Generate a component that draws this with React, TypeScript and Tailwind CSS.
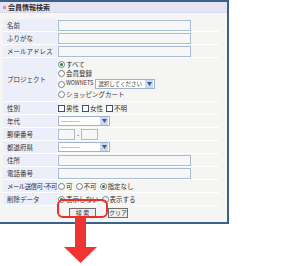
import React from "react";

const Radio = ({ checked = false }: { checked?: boolean }) => (
  <span className="inline-flex items-center justify-center w-[7px] h-[7px] rounded-full border border-[#6f7f94] bg-white mr-[1px] shrink-0">
    {checked && <span className="w-[3px] h-[3px] rounded-full bg-[#2e7d32]" />}
  </span>
);

const Check = () => (
  <span className="inline-block w-[7px] h-[7px] border border-[#3b4f74] bg-white mr-[1px] shrink-0" />
);

const Select = ({ text, w }: { text: string; w: string }) => (
  <span className={`inline-flex items-center h-[10px] border border-[#9fb4cc] bg-white ${w}`}>
    <span className="flex-1 pl-[2px] text-[5.5px] leading-[8px] text-[#333] whitespace-nowrap">{text}</span>
    <span className="w-[8px] h-[8px] mr-px bg-[#c9d8ec] flex items-center justify-center shrink-0">
      <svg width="5" height="4" viewBox="0 0 5 4"><path d="M0 0 L5 0 L2.5 4 Z" fill="#3b5c96" /></svg>
    </span>
  </span>
);

const Input = ({ w = "w-[133px]" }: { w?: string }) => (
  <span className={`block h-[11px] border border-[#a8bdd3] bg-[#f7f7f7] ${w}`} />
);

const Label = ({ children, cls = "" }: { children: React.ReactNode; cls?: string }) => (
  <div className={`bg-[#eceef9] flex items-center pl-[4px] text-[6.5px] leading-none text-[#333] whitespace-nowrap ${cls}`}>{children}</div>
);

const Val = ({ children, cls = "" }: { children?: React.ReactNode; cls?: string }) => (
  <div className={`flex items-center pl-px text-[6.5px] leading-none text-[#333] whitespace-nowrap bg-[#f5f5f4] ${cls}`}>{children}</div>
);

export default function App() {
  return (
    <div className="relative w-[281px] h-[266px] bg-white font-['Noto_Sans_CJK_JP','Noto_Sans',sans-serif] overflow-hidden">
      <div className="w-[229px] h-[224px] border-t-2 border-r-2 border-b-2 border-[#3d5f8c] bg-[#f5f5f4] flex flex-col">
        <div className="h-[11px] bg-[#e6e3f3] flex items-center pl-[3px] border-b border-dotted border-[#d4d0ea]">
          <span className="w-[3px] h-[3px] bg-[#b79ad0] mr-[2px]" />
          <span className="text-[7px] font-bold leading-none text-[#333]">会員情報検索</span>
        </div>
        <div className="mt-[6px] ml-[3px] mr-[8px] grid grid-cols-[54px_1fr] gap-y-px bg-white">
          <Label>名前</Label>
          <Val cls="h-[12px]"><Input /></Val>
          <Label>ふりがな</Label>
          <Val cls="h-[12px]"><Input /></Val>
          <Label>メールアドレス</Label>
          <Val cls="h-[12px]"><Input /></Val>
          <Label>プロジェクト</Label>
          <div className="flex flex-col py-[2px] pl-px text-[6.5px] leading-none text-[#333] bg-[#f5f5f4] whitespace-nowrap">
            <div className="h-[9px] flex items-center"><Radio checked />すべて</div>
            <div className="h-[9px] flex items-center"><Radio />会員登録</div>
            <div className="h-[12px] flex items-center"><Radio /><span className="text-[5.5px] mr-[2px]">WOWNETS</span><Select text="選択してください" w="w-[60px]" /></div>
            <div className="h-[9px] flex items-center"><Radio />ショッピングカート</div>
          </div>
          <Label>性別</Label>
          <Val cls="h-[12px]"><Check />男性<span className="w-[3px]" /><Check />女性<span className="w-[3px]" /><Check />不明</Val>
          <Label>年代</Label>
          <Val cls="h-[12px]"><Select text="----------" w="w-[52px]" /></Val>
          <Label>郵便番号</Label>
          <Val cls="h-[12px]"><Input w="w-[17px]" /><span className="mx-[2px]">-</span><Input w="w-[17px]" /></Val>
          <Label>都道府県</Label>
          <Val cls="h-[12px]"><Select text="----------" w="w-[52px]" /></Val>
          <Label>住所</Label>
          <Val cls="h-[12px]"><Input /></Val>
          <Label>電話番号</Label>
          <Val cls="h-[12px]"><Input /></Val>
          <Label cls="pl-[2px] tracking-[-0.6px]">メール送信可･不可</Label>
          <Val cls="h-[12px] pl-[3px]"><Radio />可<span className="w-[3px]" /><Radio />不可<span className="w-[3px]" /><Radio checked />指定なし</Val>
          <Label>削除データ</Label>
          <Val cls="h-[12px] pl-[3px]"><Radio checked />表示しない<span className="w-[3px]" /><Radio />表示する</Val>
          <div className="col-span-2 h-[13px] bg-[#f5f5f4] flex items-center pl-[66px] gap-[12px]">
            <button className="h-[10px] w-[27px] p-0 border border-[#6e6e6e] bg-[#eeeeee] text-[6px] leading-none text-[#333] whitespace-nowrap">検 索</button>
            <button className="h-[10px] w-[20px] p-0 border border-[#6e6e6e] bg-[#eeeeee] text-[6px] leading-none text-[#333] whitespace-nowrap">クリア</button>
          </div>
        </div>
      </div>
      <svg className="absolute left-0 top-0 pointer-events-none" width="281" height="266" viewBox="0 0 281 266">
        <rect x="58" y="200" width="49" height="17" rx="5" fill="none" stroke="#e8302c" strokeWidth="2" />
        <polygon points="75,218 86,218 86,247 97,247 80.5,263 64,247 75,247" fill="#ee3530" />
      </svg>
    </div>
  );
}
